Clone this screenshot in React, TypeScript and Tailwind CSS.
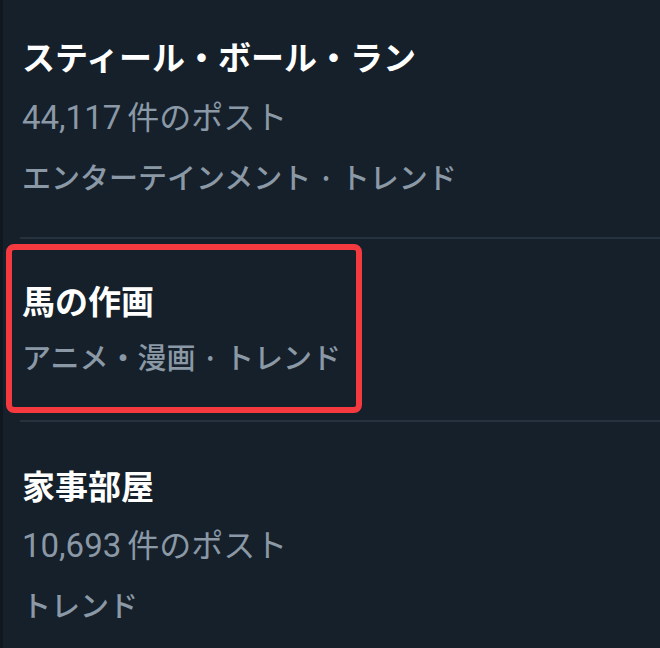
const font = { fontFamily: '"Noto Sans CJK JP", "Noto Sans", sans-serif' };
const postsFont = { fontFamily: 'Roboto, "Noto Sans CJK JP", sans-serif' };

type Trend = { title: string; posts?: string; category: string };

const trends: Trend[] = [
  { title: "スティール・ボール・ラン", posts: "44,117", category: "エンターテインメント · トレンド" },
  { title: "馬の作画", category: "アニメ・漫画 · トレンド" },
  { title: "家事部屋", posts: "10,693", category: "トレンド" },
];

function Posts({ n, lh }: { n: string; lh: string }) {
  return (
    <div className={`text-[33px] text-[#8b98a5] ${lh}`} style={postsFont}>
      {n}
      <span className="ml-[6px] text-[32px]" style={font}>件のポスト</span>
    </div>
  );
}

export default function App() {
  return (
    <div className="w-[660px] h-[648px] bg-[#15202b] overflow-hidden border-l-[3px] border-[#10171f]" style={font}>
      {/* row 1 */}
      <div className="pl-[19px] pt-[27px] h-[237px]">
        <div className="text-[33px] font-bold text-white leading-[59px]">{trends[0].title}</div>
        <Posts n={trends[0].posts!} lh="leading-[59px]" />
        <div className="text-[29px] font-medium text-[#8b98a5] leading-[59px]">{trends[0].category}</div>
      </div>
      <div className="ml-[17px] h-[2px] bg-[#26323d]" />

      {/* row 2 - highlighted */}
      <div className="h-[181px] pt-[5px] pl-[3px]">
        <div className="w-[356px] h-[169px] border-[6px] border-[#f43a3f] rounded-[8px] pl-[10px] pt-[22px]">
          <div className="text-[33px] font-bold text-white leading-[56px]">{trends[1].title}</div>
          <div className="text-[29px] font-medium text-[#8b98a5] leading-[56px]">{trends[1].category}</div>
        </div>
      </div>
      <div className="ml-[17px] h-[2px] bg-[#26323d]" />

      {/* row 3 */}
      <div className="pl-[19px] pt-[34px]">
        <div className="text-[33px] font-bold text-white leading-[58px]">{trends[2].title}</div>
        <Posts n={trends[2].posts!} lh="leading-[58px]" />
        <div className="text-[29px] font-medium text-[#8b98a5] leading-[58px]">{trends[2].category}</div>
      </div>
    </div>
  );
}
